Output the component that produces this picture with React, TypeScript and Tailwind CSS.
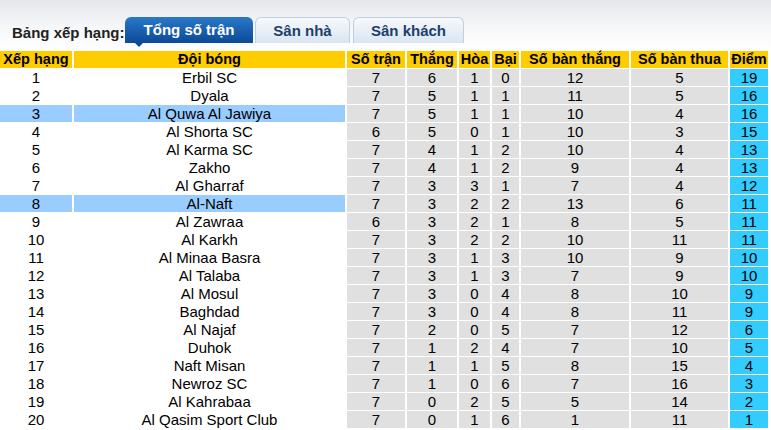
const rows: [number, string, number, number, number, number, number, number, number][] = [
  [1, 'Erbil SC', 7, 6, 1, 0, 12, 5, 19],
  [2, 'Dyala', 7, 5, 1, 1, 11, 5, 16],
  [3, 'Al Quwa Al Jawiya', 7, 5, 1, 1, 10, 4, 16],
  [4, 'Al Shorta SC', 6, 5, 0, 1, 10, 3, 15],
  [5, 'Al Karma SC', 7, 4, 1, 2, 10, 4, 13],
  [6, 'Zakho', 7, 4, 1, 2, 9, 4, 13],
  [7, 'Al Gharraf', 7, 3, 3, 1, 7, 4, 12],
  [8, 'Al-Naft', 7, 3, 2, 2, 13, 6, 11],
  [9, 'Al Zawraa', 6, 3, 2, 1, 8, 5, 11],
  [10, 'Al Karkh', 7, 3, 2, 2, 10, 11, 11],
  [11, 'Al Minaa Basra', 7, 3, 1, 3, 10, 9, 10],
  [12, 'Al Talaba', 7, 3, 1, 3, 7, 9, 10],
  [13, 'Al Mosul', 7, 3, 0, 4, 8, 10, 9],
  [14, 'Baghdad', 7, 3, 0, 4, 8, 11, 9],
  [15, 'Al Najaf', 7, 2, 0, 5, 7, 12, 6],
  [16, 'Duhok', 7, 1, 2, 4, 7, 10, 5],
  [17, 'Naft Misan', 7, 1, 1, 5, 8, 15, 4],
  [18, 'Newroz SC', 7, 1, 0, 6, 7, 16, 3],
  [19, 'Al Kahrabaa', 7, 0, 2, 5, 5, 14, 2],
  [20, 'Al Qasim Sport Club', 7, 0, 1, 6, 1, 11, 1],
];

const highlighted = [3, 8];

const headers = ['Xếp hạng', 'Đội bóng', 'Số trận', 'Thắng', 'Hòa', 'Bại', 'Số bàn thắng', 'Số bàn thua', 'Điểm'];

const gridCols = 'grid grid-cols-[72px_271px_58px_50px_31px_27px_108px_97px_38px] gap-x-[2px]';

const App = () => {
  return (
    <div className="w-[771px] h-[430px] overflow-hidden bg-white font-['Liberation_Sans',Arial,sans-serif] text-black">
      <div className="h-[51px] flex items-start bg-gradient-to-b from-[#e4e7eb] via-[#f5f6f8] to-white">
        <div className="mt-[24px] ml-[12px] w-[113px] text-[15px] leading-[17px] font-bold text-[#222]">
          Bảng xếp hạng:
        </div>
        <div className="mt-[17px] flex gap-[2px]">
          <div className="relative w-[128px] h-[26px] rounded-t-[6px] bg-gradient-to-b from-[#2a78c8] to-[#0b4a98] text-white text-[15px] font-bold leading-[26px] text-center">
            Tổng số trận
            <div className="absolute left-[10px] top-[26px] w-0 h-0 border-x-[4px] border-x-transparent border-t-[4px] border-t-[#0b4a98]" />
          </div>
          <div className="w-[95px] h-[26px] rounded-t-[6px] border border-b-0 border-[#bfcfe0] bg-gradient-to-b from-[#f7f9fc] to-[#d9e5f1] text-[#1d3f6c] text-[15px] font-bold leading-[25px] text-center">
            Sân nhà
          </div>
          <div className="ml-[1px] w-[111px] h-[26px] rounded-t-[6px] border border-b-0 border-[#bfcfe0] bg-gradient-to-b from-[#f7f9fc] to-[#d9e5f1] text-[#1d3f6c] text-[15px] font-bold leading-[25px] text-center">
            Sân khách
          </div>
        </div>
      </div>

      <div className="flex flex-col gap-y-[1px]">
        <div className={gridCols}>
          {headers.map(h => (
            <div
              key={h}
              className="h-[17px] bg-[#ffcc00] text-[14.5px] leading-[17px] font-bold text-center whitespace-nowrap">
              {h}
            </div>
          ))}
        </div>
        {rows.map(r => {
          const hl = highlighted.includes(r[0]);
          return (
            <div key={r[0]} className={`${gridCols} text-[15px] leading-[17px] text-center`}>
              <div className={`h-[17px] ${hl ? 'bg-[#99ccff]' : 'bg-white'}`}>{r[0]}</div>
              <div className={`h-[17px] whitespace-nowrap ${hl ? 'bg-[#99ccff]' : 'bg-white'}`}>{r[1]}</div>
              {r.slice(2, 8).map((v, i) => (
                <div key={i} className="h-[17px] bg-[#e0e0e0]">
                  {v}
                </div>
              ))}
              <div className="h-[17px] bg-[#33ccff]">{r[8]}</div>
            </div>
          );
        })}
      </div>
    </div>
  );
};

export default App;
